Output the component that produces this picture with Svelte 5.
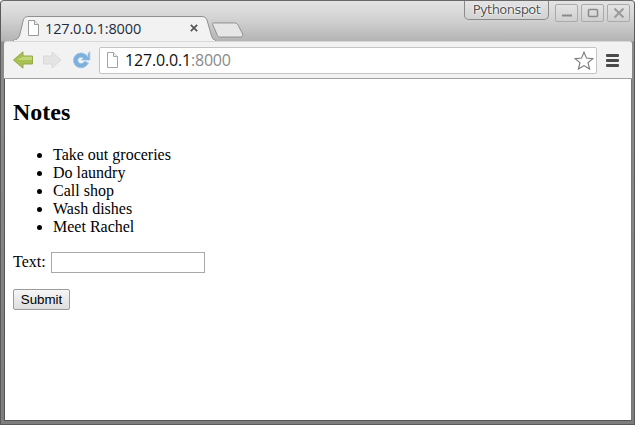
<script>
  const notes = ['Take out groceries', 'Do laundry', 'Call shop', 'Wash dishes', 'Meet Rachel'];
</script>

<div class="window">
  <header class="titlebar">
    <div class="tab">
      <svg class="tabshape" width="203" height="26" viewBox="0 0 203 26">
        <path d="M0 25.500C4 25 6 23 7 19L10 6C11 2.500 12.500 1.500 16 1.500H188C191.500 1.500 193 2.500 194 5L198 19C199 23 200 25 203 25.500V26H0Z" fill="#f2f2f2" stroke="#8f8f8f"/>
        <path d="M1 26H202" stroke="#f2f2f2" stroke-width="2"/>
      </svg>
      <svg class="fileicon" width="14" height="16" viewBox="0 0 14 16">
        <path d="M2.500 .5H8.500L12.500 4.500V15.500H2.500Z" fill="#fff" stroke="#9a9a9a"/>
        <path d="M8.500 .5V4.500H12.500" fill="#eee" stroke="#9a9a9a"/>
      </svg>
      <span class="tabtitle">127.0.0.1:8000</span>
      <svg class="close" width="8" height="8" viewBox="0 0 8 8">
        <path d="M.8 .8L7.200 7.200M7.200 .8L.8 7.200" stroke="#555" stroke-width="1.700"/>
      </svg>
    </div>
    <svg class="newtab" width="32" height="18" viewBox="0 0 34 18">
      <path d="M1.500 1.500H24C26 1.500 27 2.500 28 4.500L32.500 13C33.500 15.500 32 16.500 30 16.500H9C7 16.500 6 15.500 5.500 14L.8 3.500C.4 2.500 .5 1.500 1.500 1.500Z" fill="#e6e6e6" stroke="#8c8c8c"/>
    </svg>
    <div class="spacer"></div>
    <div class="profile">Pythonspot</div>
    <div class="controls">
      <div class="ctl"><svg width="14" height="10" viewBox="0 0 14 10"><path d="M2 7.500H12" stroke="#8a8a8a" stroke-width="2"/></svg></div>
      <div class="ctl"><svg width="14" height="10" viewBox="0 0 14 10"><rect x="2.500" y="1.500" width="9" height="7" rx="1" fill="none" stroke="#8a8a8a" stroke-width="1.500"/></svg></div>
      <div class="ctl"><svg width="14" height="10" viewBox="0 0 14 10"><path d="M2.500 .5L11.500 9.500M11.500 .5L2.500 9.500" stroke="#999" stroke-width="2"/></svg></div>
    </div>
  </header>

  <nav class="toolbar">
    <svg width="22" height="20" viewBox="0 0 22 20">
      <path d="M1.500 10L11 1.800V6H20.500V14H11V18.200Z" fill="#a9c14f" stroke="#93a84a"/>
      <path d="M11 6.800H20V10H5Z" fill="#c4d67a"/>
    </svg>
    <svg class="forward" width="20" height="20" viewBox="0 0 20 20">
      <path d="M19 10L10 2V6H1.500V14H10V18Z" fill="#e4e4e4" stroke="#d8d8d8"/>
    </svg>
    <svg class="reload" width="20" height="20" viewBox="0 0 20 20">
      <path d="M17 7.500C15.500 4.500 13 3 10 3C5.800 3 2.500 6.200 2.500 10.300C2.500 14.500 5.800 17.800 10 17.800C13 17.800 15.600 16.200 17.500 13L13.600 11.300C12.800 12.800 11.600 13.500 10 13.500C8.200 13.500 6.800 12.200 6.800 10.300C6.800 8.500 8.200 7.200 10 7.200C11 7.200 11.700 7.500 12.300 8.200L10.500 10H18.800V1.800L17 3.700Z" fill="#7cafdc" stroke="#9cc3e6" stroke-width=".8"/>
    </svg>
    <div class="omnibox">
      <svg class="urlfile" width="13" height="16" viewBox="0 0 13 16">
        <path d="M1.500 .5H7.500L11.500 4.500V15.500H1.500Z" fill="#fff" stroke="#a5a5a5"/>
        <path d="M7.500 .5V4.500H11.500" fill="#eee" stroke="#a5a5a5"/>
      </svg>
      <span class="host">127.0.0.1</span><span class="port">:8000</span>
      <div class="spacer"></div>
      <svg width="20" height="19" viewBox="0 0 20 19">
        <path d="M10 1.200L12.500 7.100L18.900 7.600L14 11.700L15.600 18L10 14.600L4.400 18L6 11.700L1.100 7.600L7.500 7.100Z" fill="#fff" stroke="#777" stroke-width="1.100"/>
      </svg>
    </div>
    <div class="menu"><i></i><i></i><i></i></div>
  </nav>

  <main class="page">
    <h2>Notes</h2>
    <ul>
      {#each notes as note}
        <li>{note}</li>
      {/each}
    </ul>
    <form onsubmit={(e) => e.preventDefault()}>
      <p><label for="text">Text:</label> <input id="text" type="text" /></p>
      <p><button type="submit">Submit</button></p>
    </form>
  </main>
</div>

<style>
  :global(body) {
    margin: 0;
    overflow: hidden;
  }
  .window {
    box-sizing: border-box;
    width: 635px;
    height: 425px;
    display: flex;
    flex-direction: column;
    background: linear-gradient(#e4e4e4 0, #d2d2d2 18px, #b4b4b4 40px, #8c8c8c 41px, #7d7d7d 100%);
    border: 1px solid #5a5a5a;
    border-top-color: #6a6a6a;
    border-radius: 4px 4px 0 0;
    padding: 0 2px 3px 3px;
  }
  .titlebar {
    height: 40px;
    flex: none;
    display: flex;
    align-items: flex-start;
    box-sizing: border-box;
  }
  .spacer {
    flex: 1;
  }
  .tab {
    position: relative;
    width: 203px;
    height: 26px;
    margin-top: 14px;
    margin-left: 9px;
    display: flex;
    align-items: center;
    z-index: 1;
    flex: none;
  }
  .tabshape {
    position: absolute;
    left: 0;
    top: 0;
  }
  .fileicon {
    position: relative;
    margin-left: 13px;
  }
  .tabtitle {
    position: relative;
    margin-left: 5px;
    font-family: "Open Sans", sans-serif;
    font-size: 14.500px;
    color: #1d2d44;
    white-space: nowrap;
    width: 145px;
    letter-spacing: -0.15px;
  }
  .close {
    position: relative;
  }
  .newtab {
    margin-top: 20px;
    margin-left: -4px;
    flex: none;
  }
  .profile {
    box-sizing: border-box;
    width: 85px;
    height: 19px;
    margin-top: 0;
    border: 1px solid #8a8a8a;
    border-top: 0;
    border-radius: 0 0 5px 5px;
    font: 13px/18px "DejaVu Sans", sans-serif;
    letter-spacing: -0.55px;
    text-align: center;
    color: #555;
    text-shadow: 0 0 1px #fff, 0 0 2px #fff, 0 0 2px #fff;
  }
  .controls {
    display: flex;
    gap: 3px;
    margin-left: 6px;
    margin-right: 2px;
    margin-top: 3px;
  }
  .ctl {
    box-sizing: border-box;
    width: 23px;
    height: 18px;
    border: 1px solid #aaa;
    border-radius: 2px;
    background: linear-gradient(#e4e4e4, #cfcfcf);
    display: flex;
    align-items: center;
    justify-content: center;
  }
  .toolbar {
    height: 38px;
    flex: none;
    box-sizing: border-box;
    background: #f2f2f2;
    border-bottom: 1px solid #a0a0a0;
    border-top: 1px solid #d8d8d8;
    border-radius: 3px 3px 0 0;
    display: flex;
    align-items: center;
    padding: 0 7px 0 8px;
  }
  .forward {
    margin-left: 8px;
  }
  .reload {
    margin-left: 9px;
  }
  .omnibox {
    box-sizing: border-box;
    margin-left: 8px;
    width: 498px;
    height: 27px;
    background: #fff;
    border: 1px solid #c4c4c4;
    border-radius: 2px;
    display: flex;
    align-items: center;
    padding: 0 2px 0 6px;
    font: 16px "Open Sans", sans-serif;
    letter-spacing: -0.18px;
  }
  .urlfile {
    margin-right: 6px;
    flex: none;
  }
  .host {
    color: #111;
  }
  .port {
    color: #8a8a8a;
  }
  .menu {
    margin-left: 9px;
    display: flex;
    flex-direction: column;
    gap: 2px;
  }
  .menu i {
    display: block;
    width: 13px;
    height: 3px;
    background: #4a4a4a;
    border-radius: 1px;
  }
  .page {
    flex: 1;
    min-height: 0;
    background: #fff;
    padding: 8px;
    border-left: 1px solid #555;
    border-right: 1px solid #777;
    border-bottom: 1px solid #555;
    font: 16px "Liberation Serif", serif;
    color: #000;
    overflow: hidden;
  }
  h2 {
    font-size: 24px;
    font-weight: bold;
    margin: 12px 0 19.920px;
    line-height: 27px;
  }
  ul {
    margin: 16px 0;
    padding-left: 40px;
    line-height: 18px;
  }
  p {
    margin: 16px 0;
  }
  label {
    margin-right: 1px;
  }
  input {
    box-sizing: border-box;
    width: 154px;
    height: 21px;
    border: 1px solid #a9a9a9;
    padding: 1px 2px;
    background: #fff;
  }
  button {
    box-sizing: border-box;
    width: 57px;
    height: 21px;
    padding: 0;
    border: 1px solid #9a9a9a;
    border-radius: 2px;
    background: linear-gradient(#f6f6f6, #dedede);
    font: 13.330px "Liberation Sans", sans-serif;
    color: #000;
  }
</style>
